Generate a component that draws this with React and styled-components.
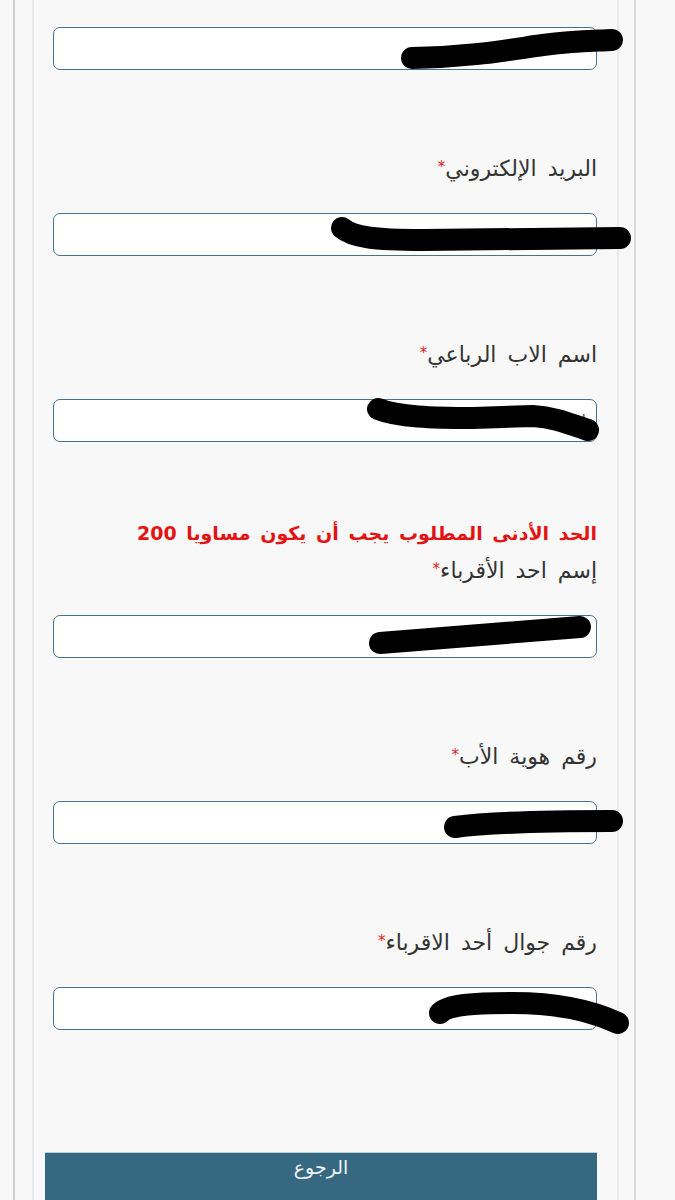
import React from "react";
import styled, { createGlobalStyle } from "styled-components";

const GlobalStyle = createGlobalStyle`
  html, body {
    margin: 0;
    padding: 0;
    background: #f8f8f8;
  }
  body {
    font-family: "DejaVu Sans", "Noto Sans", sans-serif;
  }
`;

const fields = [
  { id: "name", value: "", scribble: "M359,31 C420,30 460,22 490,18 C520,14 540,14 559,13" },
  {
    id: "email",
    label: "البريد الإلكتروني",
    value: "",
    scribble: "M289,15 C300,24 320,27 370,27 L567,25",
  },
  {
    id: "father",
    label: "اسم الاب الرباعي",
    value: "ا",
    scribble: "M325,10 C345,18 380,19 420,19 L480,17 C500,18 515,24 535,31",
  },
  {
    id: "relative",
    label: "إسم احد الأقرباء",
    error: "الحد الأدنى المطلوب يجب أن يكون مساويا 200",
    value: "",
    scribble: "M327,28 C380,24 450,18 527,12",
  },
  {
    id: "fatherId",
    label: "رقم هوية الأب",
    value: "",
    scribble: "M402,26 C440,21 500,20 559,20",
  },
  {
    id: "relativePhone",
    label: "رقم جوال أحد الاقرباء",
    value: "",
    scribble: "M387,26 C395,18 420,16 460,16 C500,16 535,22 565,36",
  },
];

const Field = ({ label, error, value, scribble, first }) => (
  <Group $first={first}>
    {error && <ErrorText>{error}</ErrorText>}
    {label && (
      <Label>
        {label}
        <Required>*</Required>
      </Label>
    )}
    <InputWrap>
      <TextInput type="text" defaultValue={value} readOnly />
      <Scribble viewBox="0 0 600 60" aria-hidden="true">
        <path
          d={scribble}
          fill="none"
          stroke="#000"
          strokeWidth="22"
          strokeLinecap="round"
          strokeLinejoin="round"
        />
      </Scribble>
    </InputWrap>
  </Group>
);

export default function App() {
  return (
    <>
      <GlobalStyle />
      <Frame>
        <Panel>
          <Form dir="rtl" onSubmit={e => e.preventDefault()}>
            {fields.map((f, i) => (
              <Field key={f.id} {...f} first={i === 0} />
            ))}
            <BackButton type="button">الرجوع</BackButton>
          </Form>
        </Panel>
      </Frame>
    </>
  );
}

const Frame = styled.div`
  box-sizing: border-box;
  margin-left: 13px;
  width: 623px;
  padding: 0 15px 0 17px;
  border-left: 2px solid #cfcfcf;
  border-right: 2px solid #d8d8d8;
  background: #f8f8f8;
`;

const Panel = styled.div`
  border-left: 2px solid #e9e9e9;
  border-right: 2px solid #e9e9e9;
  background: #f8f8f8;
`;

const Form = styled.form`
  display: flex;
  flex-direction: column;
  padding: 0 20px 40px 19px;
`;

const Group = styled.div`
  display: flex;
  flex-direction: column;
  padding-top: ${p => (p.$first ? "27px" : "82px")};
`;

const Label = styled.label`
  display: block;
  height: 30px;
  line-height: 30px;
  font-size: 22px;
  color: #333;
  text-align: right;
  margin-bottom: 31px;
  word-spacing: 4px;
`;

const Required = styled.span`
  color: #e01b1b;
  font-size: 15px;
  vertical-align: 4px;
`;

const ErrorText = styled.div`
  height: 24px;
  line-height: 24px;
  margin: -3px 0 9px;
  font-size: 19px;
  font-weight: bold;
  color: #e21515;
  text-align: right;
  word-spacing: 3px;
`;

const InputWrap = styled.div`
  position: relative;
`;

const TextInput = styled.input`
  box-sizing: border-box;
  width: 100%;
  height: 43px;
  border: 1.5px solid #48718b;
  border-radius: 7px;
  background: #fff;
  padding: 0 10px;
  font-family: inherit;
  font-size: 16px;
  color: #555;
  text-align: right;
  outline: none;
`;

const Scribble = styled.svg`
  position: absolute;
  left: 0;
  top: 0;
  width: 600px;
  height: 60px;
  overflow: visible;
  pointer-events: none;
`;

const BackButton = styled.button`
  box-sizing: border-box;
  margin: 122px 0 0 -7px;
  width: calc(100% + 8px);
  height: 60px;
  padding: 1px 0 0;
  border: none;
  border-top: 1px solid #b9cfdb;
  background: #376882;
  color: #eef3f6;
  font-family: inherit;
  font-size: 19px;
  text-align: center;
  align-self: flex-start;
  display: flex;
  justify-content: center;
  align-items: flex-start;
  line-height: 26px;
`;
